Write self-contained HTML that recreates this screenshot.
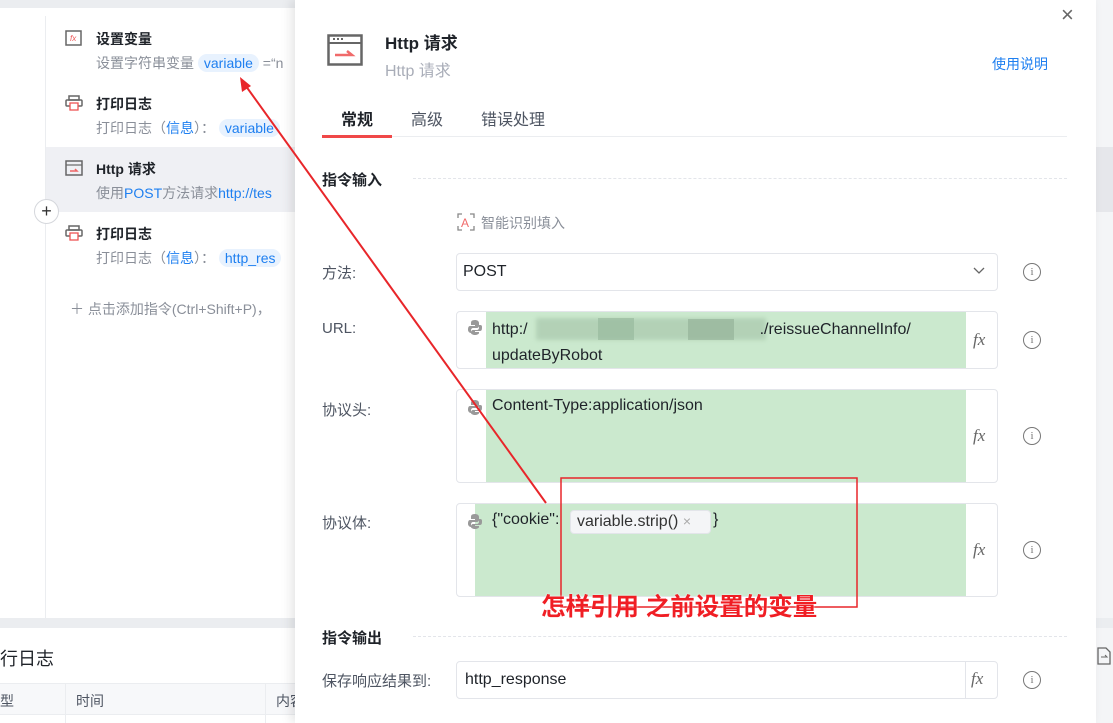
<!DOCTYPE html>
<html><head><meta charset="utf-8">
<style>
*{margin:0;padding:0;box-sizing:border-box}
body{width:1113px;height:723px;overflow:hidden;position:relative;background:#fff;font-family:"Liberation Sans","Noto Sans CJK SC",sans-serif;color:#1f2329}
.a{position:absolute}
.t{font-size:14px;font-weight:bold;color:#1f2329}
.s{font-size:14px;color:#8a8f99;white-space:nowrap}
.b{color:#1e7ff0}
.tag{background:#e8f2fe;color:#1e7ff0;border-radius:10px;padding:1px 6px}
.lbl{font-size:15px;color:#4e5562}
.box{border:1px solid #e3e5ea;border-radius:4px;background:#fff}
.g{background:#cbe9ce}
.fx{font-family:"Liberation Serif",serif;font-style:italic;font-size:17px;color:#666}
.info{width:18px;height:18px;border:1.3px solid #777;border-radius:50%;font-size:11px;color:#777;text-align:center;line-height:16px;font-family:"Liberation Serif",serif}
.in{font-size:16px;color:#1f2329}
</style></head><body>
<div class="a" style="left:0;top:0;width:1113px;height:8px;background:#ebedf0"></div>
<div class="a" style="left:45px;top:16px;width:1px;height:602px;background:#ebedf0"></div>
<div class="a" style="left:46px;top:147px;width:260px;height:65px;background:#eff0f4"></div>
<div class="a" style="left:0;top:618px;width:300px;height:10px;background:#ebedf0"></div>
<div class="a" style="left:1096px;top:0;width:17px;height:723px;background:#f4f5f7"></div>
<div class="a" style="left:1096px;top:147px;width:17px;height:65px;background:#e6e7eb"></div>
<div class="a" style="left:1096px;top:618px;width:17px;height:10px;background:#ebedf0"></div>

<svg class="a" style="left:65px;top:30px" width="18" height="16"><rect x="1" y="1" width="15" height="14" fill="none" stroke="#666" stroke-width="1.5"/><text x="5" y="11" font-size="8" fill="#e55" font-style="italic">fx</text></svg>
<div class="a t" style="left:96px;top:29px">设置变量</div>
<div class="a s" style="left:96px;top:53px">设置字符串变量 <span class="tag">variable</span> =“n</div>
<svg class="a" style="left:65px;top:95px" width="18" height="16"><rect x="4" y="1" width="10" height="4" fill="none" stroke="#666" stroke-width="1.5"/><rect x="1" y="5" width="16" height="6" rx="1" fill="none" stroke="#666" stroke-width="1.5"/><rect x="5" y="8" width="8" height="7" fill="#fff" stroke="#e55" stroke-width="1.3"/></svg>
<div class="a t" style="left:96px;top:94px">打印日志</div>
<div class="a s" style="left:96px;top:118px">打印日志（<span class="b">信息</span>）： <span class="tag">variable</span></div>
<svg class="a" style="left:65px;top:160px" width="18" height="16"><rect x="1" y="1" width="16" height="14" fill="none" stroke="#666" stroke-width="1.5"/><line x1="1" y1="5" x2="17" y2="5" stroke="#666" stroke-width="1.2"/><path d="M5 11h7l-2-2" stroke="#e66" fill="none" stroke-width="1.5"/></svg>
<div class="a t" style="left:96px;top:159px">Http 请求</div>
<div class="a s" style="left:96px;top:183px">使用<span class="b">POST</span>方法请求<span class="b">http://tes</span></div>
<div class="a" style="left:34px;top:199px;width:25px;height:25px;border:1px solid #d5d7dc;border-radius:50%;background:#fff;text-align:center;line-height:22px;font-size:18px;color:#333">+</div>
<svg class="a" style="left:65px;top:225px" width="18" height="16"><rect x="4" y="1" width="10" height="4" fill="none" stroke="#666" stroke-width="1.5"/><rect x="1" y="5" width="16" height="6" rx="1" fill="none" stroke="#666" stroke-width="1.5"/><rect x="5" y="8" width="8" height="7" fill="#fff" stroke="#e55" stroke-width="1.3"/></svg>
<div class="a t" style="left:96px;top:224px">打印日志</div>
<div class="a s" style="left:96px;top:248px">打印日志（<span class="b">信息</span>）： <span class="tag">http_res</span></div>
<div class="a s" style="left:70px;top:299px;font-size:14px">＋ 点击添加指令(Ctrl+Shift+P)，</div>

<div class="a" style="left:0;top:645px;font-size:18px;color:#1f2329">行日志</div>
<div class="a" style="left:0;top:683px;width:300px;height:32px;background:#f7f8fa;border-top:1px solid #ebedf0;border-bottom:1px solid #ebedf0"></div>
<div class="a" style="left:65px;top:683px;width:1px;height:40px;background:#ebedf0"></div>
<div class="a" style="left:265px;top:683px;width:1px;height:40px;background:#ebedf0"></div>
<div class="a" style="left:0;top:691px;font-size:14px;color:#4e5562">型</div>
<div class="a" style="left:76px;top:691px;font-size:14px;color:#4e5562">时间</div>
<div class="a" style="left:276px;top:691px;font-size:14px;color:#4e5562">内容</div>

<div class="a" style="left:295px;top:0;width:801px;height:723px;background:#fff;box-shadow:-4px 0 10px rgba(0,0,0,.1)"></div>
<div class="a" style="left:1061px;top:2px;font-size:22px;color:#666;font-weight:200">×</div>
<svg class="a" style="left:327px;top:34px" width="36" height="32"><rect x="1.5" y="1.5" width="33" height="29" fill="none" stroke="#666" stroke-width="2.5"/><line x1="1" y1="9" x2="35" y2="9" stroke="#666" stroke-width="2"/><rect x="6" y="4" width="2" height="2" fill="#666"/><rect x="10" y="4" width="2" height="2" fill="#666"/><rect x="14" y="4" width="2" height="2" fill="#666"/><path d="M8 21h17l-5-4" stroke="#f06a6a" stroke-width="2.5" fill="none"/></svg>
<div class="a" style="left:385px;top:29px;font-size:17px;font-weight:bold">Http 请求</div>
<div class="a" style="left:385px;top:57px;font-size:16px;color:#a9adb8">Http 请求</div>
<div class="a" style="left:992px;top:54px;font-size:14px;color:#1e7ff0">使用说明</div>
<div class="a" style="left:341px;top:106px;font-size:16px;font-weight:bold;color:#1f2329">常规</div>
<div class="a" style="left:411px;top:106px;font-size:16px;color:#4e5562">高级</div>
<div class="a" style="left:481px;top:106px;font-size:16px;color:#4e5562">错误处理</div>
<div class="a" style="left:322px;top:136px;width:745px;height:1px;background:#ebedf0"></div>
<div class="a" style="left:322px;top:135px;width:70px;height:3px;background:#f04848"></div>
<div class="a" style="left:322px;top:169px;font-size:15px;font-weight:bold">指令输入</div>
<div class="a" style="left:413px;top:178px;width:654px;border-top:1px dashed #e3e5ea"></div>
<svg class="a" style="left:457px;top:213px" width="18" height="18"><path d="M1 5V1h4M13 1h4v4M17 13v4h-4M5 17H1v-4" stroke="#888" fill="none" stroke-width="1.3"/><text x="4" y="14" font-size="12" fill="#f06a6a">A</text></svg>
<div class="a" style="left:481px;top:213px;font-size:14px;color:#8a8f99">智能识别填入</div>

<div class="a lbl" style="left:322px;top:262px">方法:</div>
<div class="a box" style="left:456px;top:253px;width:542px;height:38px"></div>
<div class="a in" style="left:463px;top:263px">POST</div>
<svg class="a" style="left:973px;top:267px" width="12" height="8"><path d="M1 1l5 5 5-5" stroke="#666" fill="none" stroke-width="1.3"/></svg>
<div class="a info" style="left:1023px;top:263px">i</div>

<div class="a lbl" style="left:322px;top:320px">URL:</div>
<div class="a box" style="left:456px;top:311px;width:542px;height:58px"></div>
<div class="a g" style="left:486px;top:312px;width:480px;height:56px"></div>
<div class="a" style="left:536px;top:318px;width:230px;height:22px;background:#a9c8ad;opacity:.7;filter:blur(2px)"></div>
<div class="a" style="left:598px;top:318px;width:36px;height:22px;background:#93b59a;opacity:.6"></div>
<div class="a" style="left:688px;top:319px;width:46px;height:21px;background:#8fae95;opacity:.6"></div>
<div class="a in" style="left:492px;top:317px;line-height:26px">http:/<span style="display:inline-block;width:232px"></span>./reissueChannelInfo/<br>updateByRobot</div>
<div class="a fx" style="left:973px;top:330px">fx</div>
<div class="a info" style="left:1023px;top:331px">i</div>

<div class="a lbl" style="left:322px;top:399px">协议头:</div>
<div class="a box" style="left:456px;top:389px;width:542px;height:94px"></div>
<div class="a g" style="left:486px;top:390px;width:480px;height:92px"></div>
<div class="a in" style="left:492px;top:397px">Content-Type:application/json</div>
<div class="a fx" style="left:973px;top:426px">fx</div>
<div class="a info" style="left:1023px;top:427px">i</div>

<div class="a lbl" style="left:322px;top:512px">协议体:</div>
<div class="a box" style="left:456px;top:503px;width:542px;height:94px"></div>
<div class="a g" style="left:475px;top:504px;width:491px;height:92px"></div>
<div class="a in" style="left:492px;top:511px">{"cookie":</div>
<div class="a" style="left:570px;top:510px;width:141px;height:24px;background:#f4f5f7;border:1px solid #e3e5ea;border-radius:4px;font-size:16px;padding:2px 6px;color:#333">variable.strip() <span style="color:#aaa;font-size:14px">×</span></div>
<div class="a in" style="left:713px;top:511px">}</div>
<div class="a fx" style="left:973px;top:540px">fx</div>
<div class="a info" style="left:1023px;top:541px">i</div>

<svg class="a" style="left:467px;top:319px" width="16" height="16"><path d="M8 1c-4 0-4 2-4 3v2h4v1H3c-2 0-2 3-2 4s1 3 3 3V11c0-1 1-2 2-2h4c1 0 2-1 2-2V4c0-2-2-3-4-3z M12 6v3c0 1-1 2-2 2H6c-1 0-2 1-2 2v1c0 1 2 2 4 2s4-1 4-2v-1H8v-1h5c2 0 2-2 2-4s-1-2-3-2z" fill="#999"/></svg>
<svg class="a" style="left:467px;top:399px" width="16" height="16"><path d="M8 1c-4 0-4 2-4 3v2h4v1H3c-2 0-2 3-2 4s1 3 3 3V11c0-1 1-2 2-2h4c1 0 2-1 2-2V4c0-2-2-3-4-3z M12 6v3c0 1-1 2-2 2H6c-1 0-2 1-2 2v1c0 1 2 2 4 2s4-1 4-2v-1H8v-1h5c2 0 2-2 2-4s-1-2-3-2z" fill="#999"/></svg>
<svg class="a" style="left:467px;top:513px" width="16" height="16"><path d="M8 1c-4 0-4 2-4 3v2h4v1H3c-2 0-2 3-2 4s1 3 3 3V11c0-1 1-2 2-2h4c1 0 2-1 2-2V4c0-2-2-3-4-3z M12 6v3c0 1-1 2-2 2H6c-1 0-2 1-2 2v1c0 1 2 2 4 2s4-1 4-2v-1H8v-1h5c2 0 2-2 2-4s-1-2-3-2z" fill="#999"/></svg>

<div class="a" style="left:322px;top:627px;font-size:15px;font-weight:bold">指令输出</div>
<div class="a" style="left:413px;top:636px;width:654px;border-top:1px dashed #e3e5ea"></div>
<div class="a lbl" style="left:322px;top:670px">保存响应结果到:</div>
<div class="a box" style="left:456px;top:661px;width:542px;height:38px"></div>
<div class="a" style="left:965px;top:662px;width:1px;height:36px;background:#e3e5ea"></div>
<div class="a in" style="left:465px;top:671px">http_response</div>
<div class="a fx" style="left:971px;top:669px">fx</div>
<div class="a info" style="left:1023px;top:671px">i</div>

<svg class="a" style="left:0;top:0" width="1113" height="723">
<line x1="546" y1="503" x2="243" y2="82" stroke="#e8262a" stroke-width="2"/>
<path d="M240 77l2 15 9-6z" fill="#e8262a"/>
<rect x="561" y="478" width="296" height="129" fill="none" stroke="#e8262a" stroke-width="1.5"/>
</svg>
<div class="a" style="left:541px;top:588px;font-size:24.5px;font-weight:bold;color:#f01e24;text-shadow:0 0 2px #fff;white-space:nowrap">怎样引用 之前设置的变量</div>
<svg class="a" style="left:1097px;top:647px" width="14" height="18"><path d="M1 1h8l4 4v12H1z" fill="none" stroke="#666" stroke-width="1.3"/><path d="M4 10h6l-2-2" stroke="#666" fill="none"/></svg>
</body></html>
